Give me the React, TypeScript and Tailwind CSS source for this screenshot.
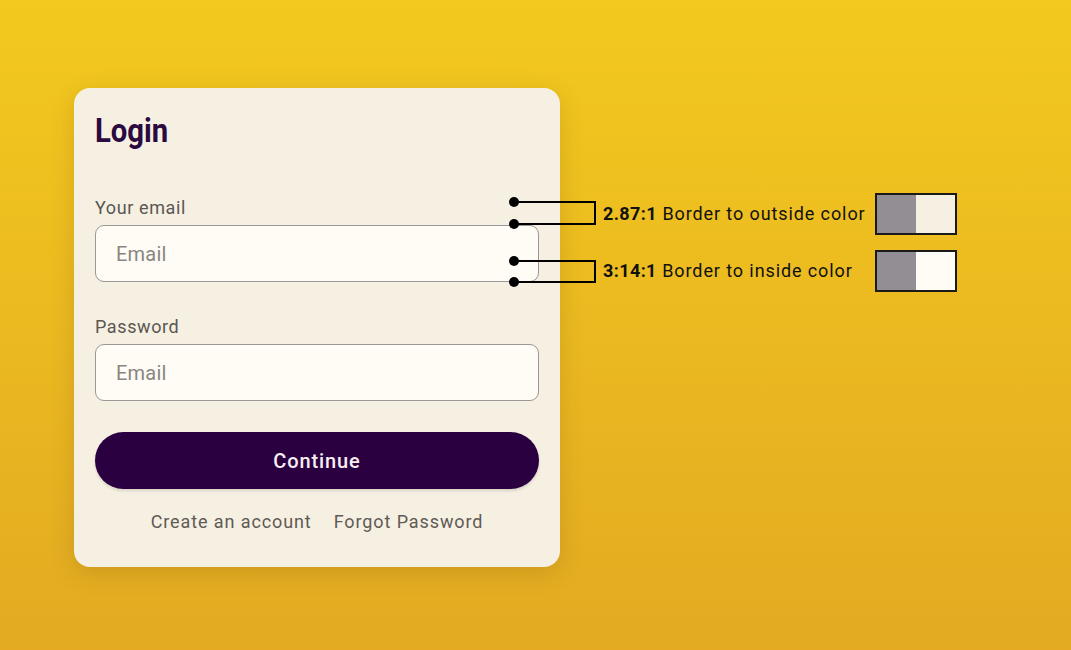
import React from "react";

const font = { fontFamily: "Roboto, 'Noto Sans', sans-serif" };

function Field({ label, placeholder }: { label: string; placeholder: string }) {
  return (
    <div className="flex flex-col gap-[7px]">
      <label className="text-[18px] leading-[20px] text-[#5b5652] tracking-[0.6px]">{label}</label>
      <input
        placeholder={placeholder}
        className="h-[57px] w-full rounded-[9px] border border-[#9c9797] bg-[#fefcf5] pl-[20px] text-[20px] tracking-[0.2px] text-[#3a3632] placeholder:text-[#8a8580] outline-none"
        style={font}
      />
    </div>
  );
}

function Note({ top, ratio, text, swatch }: { top: number; ratio: string; text: string; swatch: string }) {
  return (
    <div className="absolute left-[603px] flex items-center" style={{ top }}>
      <p className="w-[272px] text-[18px] leading-[22px] text-[#111] tracking-[0.9px]">
        <span className="font-bold tracking-[0.4px]">{ratio}</span> {text}
      </p>
      <div className="flex h-[42px] w-[82px] border-2 border-[#1a1a1a]">
        <div className="w-1/2 bg-[#938e93]" />
        <div className="w-1/2" style={{ background: swatch }} />
      </div>
    </div>
  );
}

export default function App() {
  return (
    <div
      className="relative h-[650px] w-full overflow-hidden bg-gradient-to-b from-[#f3c91e] to-[#e3aa22]"
      style={font}
    >
      <div className="pl-[74px] pt-[88px]">
        <div className="flex w-[486px] flex-col rounded-[16px] bg-[#f6f0e3] px-[21px] pb-[35px] pt-[22px] shadow-[0_6px_24px_rgba(90,60,0,0.18)]">
          <h1 className="h-[40px] origin-left scale-x-[0.86] text-[34px] font-bold leading-[40px] text-[#2a0a3f]">Login</h1>

          <div className="mt-[48px]">
            <Field label="Your email" placeholder="Email" />
          </div>
          <div className="mt-[35px]">
            <Field label="Password" placeholder="Email" />
          </div>

          <button className="mt-[31px] h-[57px] w-full rounded-full bg-[#2b0040] text-[20px] font-medium tracking-[0.9px] text-[#f6eef2] shadow-[0_2px_3px_rgba(0,0,0,0.12)]">
            Continue
          </button>

          <div className="mt-[23px] flex justify-center gap-[22px] text-[18px] leading-[20px] text-[#5f5a55] tracking-[0.9px]">
            <a>Create an account</a>
            <a>Forgot Password</a>
          </div>
        </div>
      </div>

      <svg className="absolute left-0 top-0" width="1071" height="650">
        <g stroke="#000" strokeWidth="2" fill="none">
          <polyline points="514,202 595,202 595,224 514,224" />
          <polyline points="514,261 595,261 595,282 514,282" />
        </g>
        <g fill="#000">
          <circle cx="514" cy="202" r="5" />
          <circle cx="514" cy="224" r="5" />
          <circle cx="514" cy="261" r="5" />
          <circle cx="514" cy="282" r="5" />
        </g>
      </svg>

      <Note top={193} ratio="2.87:1" text="Border to outside color" swatch="#f6f0e3" />
      <Note top={250} ratio="3:14:1" text="Border to inside color" swatch="#fefcf5" />
    </div>
  );
}
